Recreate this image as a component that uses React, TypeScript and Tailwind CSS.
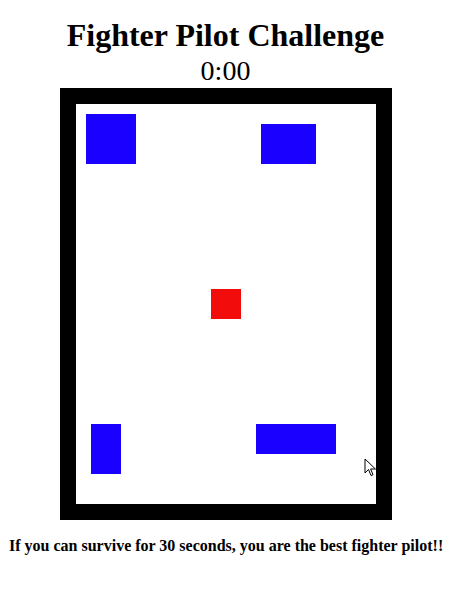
import React from 'react'

type Block = { left: number; top: number; width: number; height: number }

const enemies: Block[] = [
  { left: 10, top: 10, width: 50, height: 50 },
  { left: 185, top: 20, width: 55, height: 40 },
  { left: 15, top: 320, width: 30, height: 50 },
  { left: 180, top: 320, width: 80, height: 30 },
]

const serif = { fontFamily: '"Liberation Serif", "Times New Roman", serif' }

export default function App() {
  return (
    <div className="relative min-h-[603px] bg-white text-black" style={serif}>
      <div className="w-[451px] flex flex-col items-center pt-[17px]">
        <h1 className="text-[32px] font-bold leading-[37px]">Fighter Pilot Challenge</h1>
        <div className="text-[28px] leading-[32px] mt-[1px]">0:00</div>
        <div className="mt-[1px] border-[16px] border-black bg-white">
          <div className="relative w-[300px] h-[400px]">
            {enemies.map((b, i) => (
              <div
                key={i}
                className="absolute bg-[#1a00ff]"
                style={{ left: b.left, top: b.top, width: b.width, height: b.height }}
              />
            ))}
            <div className="absolute left-[135px] top-[185px] w-[30px] h-[30px] bg-[#f20c0c]" />
          </div>
        </div>
      </div>
      <p className="mt-[17px] pl-[9px] text-[16px] font-bold leading-[18px]">
        If you can survive for 30 seconds, you are the best fighter pilot!!
      </p>
      {/* mouse pointer caught in the screenshot */}
      <svg className="absolute left-[364px] top-[458px]" width="13" height="20" viewBox="0 0 13 20">
        <path
          d="M1 1 L1 15 L4.5 11.5 L7 17.5 L9 16.7 L6.6 11 L11.5 11 Z"
          fill="white"
          stroke="black"
          strokeWidth="1"
          strokeLinejoin="round"
        />
      </svg>
    </div>
  )
}
